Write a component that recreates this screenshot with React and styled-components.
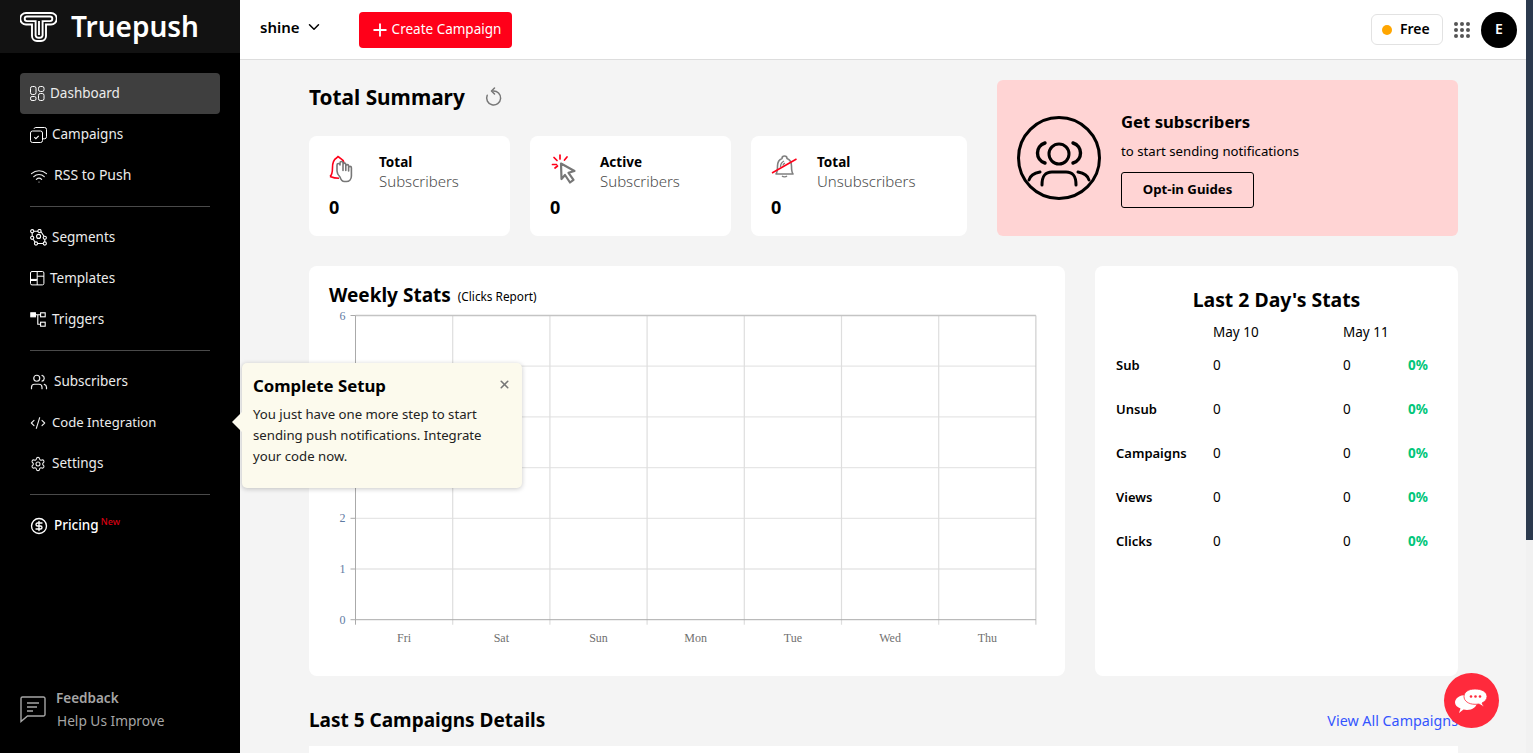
import React from 'react';
import styled, { createGlobalStyle } from 'styled-components';
import { Wifi, Users, CodeXml, Settings, CircleDollarSign, Plus, ChevronDown, X } from 'lucide-react';

const FONT = '"Noto Sans", "Open Sans", sans-serif';

const GlobalStyle = createGlobalStyle`
  html, body {
    margin: 0;
    height: 100%;
    overflow: hidden;
    font-family: ${FONT};
    color: #000;
    background: #f4f4f4;
  }
  * {
    box-sizing: border-box;
  }
`;

const Page = styled.div`
  display: flex;
  height: 753px;
  position: relative;
  overflow: hidden;
`;

/* sidebar */
const Sidebar = styled.aside`
  width: 240px;
  flex: none;
  background: #000;
  display: flex;
  flex-direction: column;
  color: #fff;
`;

const Brand = styled.div`
  height: 53px;
  background: #121212;
  display: flex;
  align-items: center;
  padding-left: 20px;
  gap: 14px;
`;

const BrandName = styled.span`
  font-size: 28px;
  font-weight: 600;
  line-height: 53px;
`;

const Nav = styled.nav`
  display: flex;
  flex-direction: column;
  padding: 20px 20px 0;
  flex: 1;
`;

const NavItem = styled.a`
  height: 41px;
  display: flex;
  align-items: center;
  padding-left: 10px;
  gap: ${({ $gap }) => $gap || 5}px;
  font-size: ${({ $size }) => $size || 13.5}px;
  color: ${({ $strong }) => ($strong ? '#fff' : '#ececec')};
  font-weight: ${({ $strong }) => ($strong ? 500 : 400)};
  border-radius: 4px;
  background: ${({ $active }) => ($active ? '#3f3f3f' : 'transparent')};
  span {
    padding-bottom: 2px;
  }
  svg {
    flex: none;
  }
`;

const Divider = styled.hr`
  border: 0;
  height: 1px;
  background: #4a4a4a;
  margin: 10px 10px;
`;

const NewTag = styled.sup`
  color: #d80012;
  font-size: 9px;
  margin-left: 2px;
  position: relative;
  top: 1px;
  line-height: 0;
`;

const Feedback = styled.div`
  display: flex;
  gap: 10px;
  padding: 0 0 23px 20px;
  color: #a6a6a6;
  font-size: 13.7px;
  align-items: center;
`;

const FeedbackText = styled.div`
  display: flex;
  flex-direction: column;
  gap: 3px;
  line-height: 19px;
  strong {
    font-weight: 600;
    font-size: 13.5px;
  }
  span {
    padding-left: 1px;
  }
`;

/* main column */
const Main = styled.div`
  flex: 1;
  min-width: 0;
  display: flex;
  flex-direction: column;
`;

const Header = styled.header`
  height: 60px;
  flex: none;
  background: #fff;
  border-bottom: 1px solid #ddd;
  display: flex;
  align-items: center;
  padding: 0 9px 0 20px;
`;

const Project = styled.div`
  display: flex;
  align-items: center;
  gap: 5px;
  font-size: 15px;
  font-weight: 600;
  width: 99px;
  padding-bottom: 6px;
`;

const CreateButton = styled.button`
  width: 153px;
  height: 36px;
  background: #ff0019;
  border: 0;
  border-radius: 4px;
  color: #fff;
  font-family: inherit;
  font-size: 13.5px;
  display: flex;
  align-items: center;
  justify-content: center;
  gap: 2px;
  padding: 0 0 2px;
  svg {
    position: relative;
    top: 1px;
  }
`;

const HeaderRight = styled.div`
  margin-left: auto;
  display: flex;
  align-items: center;
`;

const PlanPill = styled.div`
  width: 72px;
  height: 31px;
  border: 1px solid #e2e2e2;
  border-radius: 6px;
  display: flex;
  align-items: center;
  gap: 8px;
  padding: 0 0 2px 10px;
  font-size: 14px;
  font-weight: 600;
  margin-right: 10px;
  &::before {
    content: '';
    width: 10px;
    height: 10px;
    border-radius: 50%;
    background: #ffa600;
    margin-top: 2px;
  }
`;

const AppsGrid = styled.div`
  display: grid;
  grid-template-columns: repeat(3, 4px);
  gap: 2px;
  margin: 0 11px 0 1px;
  span {
    width: 4px;
    height: 4px;
    border-radius: 50%;
    background: #555;
  }
`;

const Avatar = styled.div`
  width: 36px;
  height: 36px;
  border-radius: 50%;
  background: #000;
  color: #fff;
  display: flex;
  align-items: center;
  justify-content: center;
  font-size: 14px;
  font-weight: 600;
  padding-bottom: 2px;
`;

const Content = styled.main`
  flex: 1;
  overflow: hidden;
  padding: 20px 68px 0 69px;
`;

const TopRow = styled.section`
  display: flex;
  gap: 30px;
  height: 156px;
`;

const SummaryColumn = styled.div`
  width: 658px;
  display: flex;
  flex-direction: column;
  justify-content: space-between;
`;

const TitleRow = styled.div`
  display: flex;
  align-items: center;
  gap: 19px;
  height: 34px;
`;

const PageTitle = styled.h1`
  margin: 0;
  font-size: 20.8px;
  font-weight: 700;
  color: #000;
`;

const StatCards = styled.div`
  display: grid;
  grid-template-columns: 201px 201px 216px;
  gap: 20px;
`;

const StatCard = styled.div`
  height: 100px;
  background: #fff;
  border-radius: 8px;
  padding: 17px 20px 0;
  display: grid;
  grid-template-columns: ${({ $iconWidth }) => $iconWidth || 50}px 1fr;
  grid-template-rows: 40px auto;
  row-gap: 2px;
`;

const StatLabel = styled.div`
  font-size: 13.5px;
  font-weight: 700;
  line-height: 18px;
  span {
    display: block;
    font-weight: 300;
    font-size: 15px;
    line-height: 20px;
    color: #4c4c4c;
  }
`;

const StatValue = styled.div`
  grid-column: 1 / span 2;
  font-size: 18px;
  font-weight: 700;
  line-height: 24px;
`;

const PromoCard = styled.div`
  flex: 1;
  background: #ffd4d4;
  border-radius: 6px;
  display: flex;
  align-items: center;
  gap: 20px;
  padding-left: 20px;
`;

const PromoText = styled.div`
  display: flex;
  flex-direction: column;
  align-items: flex-start;
  padding-top: 2px;
`;

const PromoTitle = styled.h3`
  margin: 0;
  font-size: 16.7px;
  font-weight: 700;
  line-height: 24px;
`;

const PromoSub = styled.p`
  margin: 7px 0 11px;
  font-size: 13.2px;
  line-height: 20px;
`;

const PromoButton = styled.button`
  width: 133px;
  height: 36px;
  background: transparent;
  border: 1px solid #000;
  border-radius: 3px;
  font-family: inherit;
  font-size: 13.2px;
  font-weight: 700;
  color: #000;
  padding: 0 0 2px;
`;

const PanelRow = styled.section`
  display: grid;
  grid-template-columns: 756px 363px;
  gap: 30px;
  margin-top: 30px;
`;

const Panel = styled.div`
  height: 410px;
  background: #fff;
  border-radius: 8px;
`;

const WeeklyPanel = styled(Panel)`
  padding: 15px 0 0 20px;
`;

const WeeklyTitle = styled.div`
  display: flex;
  align-items: center;
  gap: 7px;
  font-size: 19px;
  font-weight: 700;
  line-height: 27px;
  small {
    font-size: 11.8px;
    font-weight: 400;
    padding-top: 2px;
  }
`;

const ChartFrame = styled.svg`
  display: block;
  margin-top: -1px;
`;

const DaysPanel = styled(Panel)`
  padding: 21px 21px 0;
`;

const DaysTitle = styled.h2`
  margin: 0 0 8px;
  text-align: center;
  font-size: 19.4px;
  font-weight: 700;
  line-height: 26px;
`;

const DaysGrid = styled.div`
  display: grid;
  grid-template-columns: 97px 130px 65px 1fr;
  grid-template-rows: 22px;
  grid-auto-rows: 44px;
  font-size: 13.5px;
  align-items: center;
`;

const DaysHead = styled.div`
  font-size: 13.5px;
`;

const DaysLabel = styled.div`
  font-weight: 600;
  font-size: 13px;
`;

const Percent = styled.div`
  color: #00c67a;
  font-weight: 700;
  font-size: 13.5px;
`;

const CampaignHead = styled.div`
  display: flex;
  justify-content: space-between;
  align-items: center;
  margin-top: 31px;
  height: 26px;
`;

const SectionTitle = styled.h2`
  margin: 0;
  font-size: 19px;
  font-weight: 700;
`;

const ViewAll = styled.a`
  color: #3354ff;
  font-size: 14.3px;
  padding-top: 1px;
`;

const CampaignTable = styled.div`
  margin-top: 13px;
  height: 60px;
  background: #fff;
`;

const Scrollbar = styled.div`
  width: 7px;
  flex: none;
  background: #f1f1f1;
  &::before {
    content: '';
    display: block;
    height: 540px;
    background: #2c3a4e;
  }
`;

/* things lying over the page */
const SetupTip = styled.div`
  position: absolute;
  left: 242px;
  top: 363px;
  width: 280px;
  height: 125px;
  background: #fcfaed;
  border-radius: 5px;
  box-shadow: 0 1px 5px rgba(0, 0, 0, 0.22);
  padding: 10px 11px;
  &::before {
    content: '';
    position: absolute;
    left: -10px;
    top: 49px;
    width: 20px;
    height: 20px;
    background: #fcfaed;
    clip-path: polygon(50% 0, 100% 50%, 50% 100%, 0 50%);
  }
`;

const TipTitle = styled.div`
  font-size: 16.8px;
  font-weight: 700;
  line-height: 26px;
  margin-bottom: 5px;
`;

const TipText = styled.div`
  font-size: 13.2px;
  line-height: 21px;
  color: #222;
`;

const TipClose = styled.span`
  position: absolute;
  right: 11px;
  top: 15px;
  color: #777;
  display: flex;
`;

const ChatBubble = styled.div`
  position: absolute;
  left: 1444px;
  top: 673px;
  width: 55px;
  height: 55px;
  border-radius: 50%;
  background: #ff2a3c;
  display: flex;
  align-items: center;
  justify-content: center;
`;

const LogoMark = () => (
  <svg width="37" height="30" viewBox="0 0 37 30" fill="none" stroke="#fff" strokeWidth="1.900">
    <path d="M6 1H31a5.500 5.500 0 0 1 0 11.500H26V24a5 5 0 0 1-5 5H17a5 5 0 0 1-5-5V12.500H6A5.500 5.500 0 0 1 6 1Z" />
    <path d="M7 4.500H30a2.300 2.300 0 0 1 0 4.600H22.600V23.500a3 3 0 0 1-3 2.300h-1a3 3 0 0 1-3-2.300V9.100H7a2.300 2.300 0 0 1 0-4.600Z" />
    <path d="M19 9V23" />
  </svg>
);

const DashIcon = () => (
  <svg width="15" height="15" viewBox="0 0 15 15" fill="none" stroke="#fff" strokeWidth="1">
    <rect x="0.5" y="0.5" width="5.500" height="8" rx="1.800" />
    <rect x="8.500" y="0.5" width="5.500" height="5" rx="1.800" />
    <rect x="0.5" y="10.500" width="5.500" height="4" rx="1.600" />
    <rect x="8.500" y="7.500" width="5.500" height="7" rx="1.800" />
  </svg>
);

const CampaignIcon = () => (
  <svg width="17" height="16" viewBox="0 0 17 16" fill="none" stroke="#fff" strokeWidth="1">
    <rect x="0.5" y="4" width="12" height="11.500" rx="2" />
    <path d="M4 1.800A1.800 1.800 0 0 1 5.800.5h8.700a2 2 0 0 1 2 2v7.300a2 2 0 0 1-1.800 2h-2" />
    <path d="M4.300 10.200l1.600 1.500 2.800-2.800" strokeWidth="1.100" />
  </svg>
);

const SegmentIcon = () => (
  <svg width="17" height="17" viewBox="0 0 17 17" fill="none" stroke="#fff" strokeWidth="1.100">
    <circle cx="2.200" cy="2.200" r="1.600" />
    <circle cx="9.500" cy="2" r="1.600" />
    <circle cx="2.200" cy="8.800" r="1.600" />
    <circle cx="8.600" cy="7.400" r="2" />
    <circle cx="14.800" cy="8.800" r="1.600" />
    <circle cx="6" cy="14.500" r="1.600" />
    <circle cx="14.800" cy="14.500" r="1.600" />
    <path d="M3.800 2.200H8M2.200 3.800V7.200M11 2.800l3 4.500M3.200 10.200L5 13M7.600 14.500H13.200M14.800 10.400V13" />
  </svg>
);

const TemplateIcon = () => (
  <svg width="15" height="15" viewBox="0 0 15 15" fill="none" stroke="#fff" strokeWidth="1">
    <rect x="0.5" y="0.5" width="13.400" height="13.400" rx="1.500" />
    <path d="M7.200 .5V14M.5 8.400H7.200M7.200 5.200H14" />
    <rect x="0.8" y="8.400" width="6" height="1.600" fill="#fff" stroke="none" />
  </svg>
);

const TriggerIcon = () => (
  <svg width="16" height="15" viewBox="0 0 16 15" fill="none" stroke="#fff" strokeWidth="1.100">
    <rect x="0.8" y="0.8" width="4.600" height="4" fill="#fff" />
    <rect x="10.600" y="0.8" width="4.600" height="4" />
    <rect x="10.600" y="10.200" width="4.600" height="4" />
    <path d="M5.400 2.800h5.200M7.800 2.800V12.200h2.800" />
  </svg>
);

const FeedbackIcon = () => (
  <svg width="26" height="27" viewBox="0 0 26 27" fill="none" stroke="#a6a6a6" strokeWidth="1.400">
    <path d="M2.500 1h21a1.500 1.500 0 0 1 1.500 1.500v16a1.500 1.500 0 0 1-1.500 1.500H7.500L1 25.500V2.500A1.500 1.500 0 0 1 2.500 1Z" />
    <path d="M7 7H19M7 11H17M7 15H13" strokeWidth="1.600" />
  </svg>
);

const RefreshIcon = () => (
  <svg width="18" height="20" viewBox="0 0 18 20" fill="none" stroke="#777" strokeWidth="1.500" strokeLinecap="round" strokeLinejoin="round">
    <path d="M3.200 8.200A7 7 0 1 0 9 4" />
    <path d="M10.500 1L7.500 4l3 3" />
  </svg>
);

const BellHandIcon = () => (
  <svg width="32" height="32" viewBox="0 0 32 32" fill="none">
    <path d="M1 23.500c2-1.500 2.500-5 2.500-9 0-4.500 1.500-8 4-9.500L9 3.500l2 1.500c2 1 3.500 3 4 5M1 23.500c3 1.200 6 1.800 9 1.800" stroke="#ff0019" strokeWidth="1.600" />
    <path d="M11 24c-2-2-3-4-3-6V12a1.500 1.500 0 0 1 3 0v-2a1.500 1.500 0 0 1 3 0v7.500V11.500a1.400 1.400 0 0 1 2.800 0v6-4.500a1.400 1.400 0 0 1 2.800 0v5-3.200a1.400 1.400 0 0 1 2.800 0V23c0 3-2 5.500-5 5.500h-2c-2 0-3.500-1.500-4.400-4.500Z" fill="#fff" stroke="#777" strokeWidth="1.600" strokeLinejoin="round" />
  </svg>
);

const ClickIcon = () => (
  <svg width="28" height="32" viewBox="0 0 28 32" fill="none">
    <path d="M11 10.500l13.500 7.500-6 1.800 5 7-3.500 2.700-5-7.500-3.500 4Z" stroke="#777" strokeWidth="2.200" strokeLinejoin="round" />
    <path d="M10 2v4M4 4.500l3 3M2.500 11.500h4M17 4l-2.500 3M5 15l2.500-2" stroke="#ff0019" strokeWidth="1.700" strokeLinecap="round" />
  </svg>
);

const BellOffIcon = () => (
  <svg width="27" height="28" viewBox="0 0 27 28" fill="none">
    <path d="M5 21c1.500-2 1.500-5 1.500-8 0-4 2-6.500 4.500-7.500a2.500 2.500 0 0 1 5 0c2.500 1 4.500 3.500 4.500 7.500 0 3 0 6 1.500 8Z" stroke="#808080" strokeWidth="1.600" strokeLinejoin="round" />
    <path d="M9.500 14C9.500 11 11 9 13 8M12 12.500c0-1 .8-2 2-2.400M11 23a3 2 0 0 0 5 0" stroke="#808080" strokeWidth="1.300" />
    <path d="M1 20L25.500 6" stroke="#ff0019" strokeWidth="1.500" />
  </svg>
);

const PeopleRoundIcon = () => (
  <svg width="84" height="84" viewBox="0 0 84 84" fill="none" stroke="#000" strokeWidth="3" strokeLinecap="round">
    <circle cx="42" cy="42" r="40.500" />
    <circle cx="42" cy="38" r="10" />
    <path d="M28 27C18 30 18 44 28 47M56 27C66 30 66 44 56 47" strokeWidth="3.400" />
    <path d="M25 69c0-9 3-13 10-13h14c7 0 10 4 10 13M12 64c1-4 5-7 11-8M72 64c-1-4-5-7-11-8" />
  </svg>
);

const ChatIcon = () => (
  <svg width="35" height="26" viewBox="0 0 35 26" fill="none">
    <path d="M12 7c6.500 0 11 3.500 11 7.500S18.500 22 13 22c-1 0-2.500-.2-3.500-.5L5 25l1.500-4.500C3 19 1 17 1 14.500 1 10.500 5.500 7 12 7Z" fill="#fff" />
    <path d="M21 1c7 0 12 3 12 7.500 0 2.800-2 5-5 6.500l2 4-5-3c-1.500.2-2.800.3-4 .3-6.500 0-11-3.300-11-7.800S14.500 1 21 1Z" fill="#fff" stroke="#ff2a3c" strokeWidth="0.800" />
    <circle cx="17" cy="8.500" r="1.300" fill="#ff2a3c" />
    <circle cx="21.500" cy="8.500" r="1.300" fill="#ff2a3c" />
    <circle cx="26" cy="8.500" r="1.300" fill="#ff2a3c" />
  </svg>
);

const WEEK = ['Fri', 'Sat', 'Sun', 'Mon', 'Tue', 'Wed', 'Thu'];
const LEFT = 26.5;
const COL = 97.2;
const TOP = 0.5;
const ROW = 50.7;
// 3, 4 and 5 sit behind the setup tooltip
const Y_LABELS = [0, 1, 2, 6];

const WeeklyChart = () => (
  <ChartFrame width="730" height="340" viewBox="0 -6 730 340">
    {[1, 2, 3, 4, 5].map((n) => (
      <line key={n} x1={LEFT} x2={LEFT + COL * 7} y1={TOP + ROW * n} y2={TOP + ROW * n} stroke="#e6e6e6" strokeWidth="1.300" />
    ))}
    {[1, 2, 3, 4, 5, 6].map((n) => (
      <line key={n} x1={LEFT + COL * n} x2={LEFT + COL * n} y1={TOP} y2={TOP + ROW * 6 + 5} stroke="#dedede" strokeWidth="1.200" />
    ))}
    <line x1={LEFT} x2={LEFT + COL * 7} y1={TOP} y2={TOP} stroke="#c4c4c4" strokeWidth="1.500" />
    <line x1={LEFT + COL * 7} x2={LEFT + COL * 7} y1={TOP} y2={TOP + ROW * 6 + 5} stroke="#c4c4c4" />
    <line x1={LEFT} x2={LEFT + COL * 7} y1={TOP + ROW * 6} y2={TOP + ROW * 6} stroke="#aaa" />
    <line x1={LEFT} x2={LEFT} y1={TOP} y2={TOP + ROW * 6 + 5} stroke="#aaa" />
    {[0, 1, 2, 3, 4, 5, 6].map((n) => (
      <line key={n} x1={LEFT - 5} x2={LEFT} y1={TOP + ROW * (6 - n)} y2={TOP + ROW * (6 - n)} stroke="#aaa" />
    ))}
    {Y_LABELS.map((n) => (
      <text key={n} x={LEFT - 10} y={TOP + ROW * (6 - n) + 4} textAnchor="end" fontFamily="Liberation Serif" fontSize="12" fill="#5f7ba3">{n}</text>
    ))}
    {WEEK.map((day, i) => (
      <text key={day} x={LEFT + COL * i + COL / 2} y={TOP + ROW * 6 + 22} textAnchor="middle" fontFamily="Liberation Serif" fontSize="12" fill="#70706f">{day}</text>
    ))}
  </ChartFrame>
);

const DAY_ROWS = ['Sub', 'Unsub', 'Campaigns', 'Views', 'Clicks'];

const App = () => (
  <Page>
    <GlobalStyle />
    <Sidebar>
      <Brand>
        <LogoMark />
        <BrandName>Truepush</BrandName>
      </Brand>
      <Nav>
        <NavItem $active><DashIcon /><span>Dashboard</span></NavItem>
        <NavItem $gap={5}><CampaignIcon /><span>Campaigns</span></NavItem>
        <NavItem $gap={6} $size={14}><Wifi size={18} strokeWidth={1.600} /><span>RSS to Push</span></NavItem>
        <Divider />
        <NavItem $gap={5}><SegmentIcon /><span>Segments</span></NavItem>
        <NavItem $gap={5}><TemplateIcon /><span>Templates</span></NavItem>
        <NavItem $gap={6}><TriggerIcon /><span>Triggers</span></NavItem>
        <Divider />
        <NavItem $gap={6}><Users size={18} strokeWidth={1.600} /><span>Subscribers</span></NavItem>
        <NavItem $gap={6} $size={13.1}><CodeXml size={16} strokeWidth={1.700} /><span>Code Integration</span></NavItem>
        <NavItem $gap={6}><Settings size={16} strokeWidth={1.600} /><span>Settings</span></NavItem>
        <Divider />
        <NavItem $gap={6} $strong><CircleDollarSign size={18} strokeWidth={1.800} /><span>Pricing<NewTag>New</NewTag></span></NavItem>
      </Nav>
      <Feedback>
        <FeedbackIcon />
        <FeedbackText>
          <strong>Feedback</strong>
          <span>Help Us Improve</span>
        </FeedbackText>
      </Feedback>
    </Sidebar>

    <Main>
      <Header>
        <Project>shine <ChevronDown size={18} strokeWidth={2} /></Project>
        <CreateButton><Plus size={20} strokeWidth={2.200} />Create Campaign</CreateButton>
        <HeaderRight>
          <PlanPill>Free</PlanPill>
          <AppsGrid>
            {Array.from({ length: 9 }, (_, i) => <span key={i} />)}
          </AppsGrid>
          <Avatar>E</Avatar>
        </HeaderRight>
      </Header>

      <Content>
        <TopRow>
          <SummaryColumn>
            <TitleRow>
              <PageTitle>Total Summary</PageTitle>
              <RefreshIcon />
            </TitleRow>
            <StatCards>
              <StatCard>
                <BellHandIcon />
                <StatLabel>Total<span>Subscribers</span></StatLabel>
                <StatValue>0</StatValue>
              </StatCard>
              <StatCard>
                <ClickIcon />
                <StatLabel>Active<span>Subscribers</span></StatLabel>
                <StatValue>0</StatValue>
              </StatCard>
              <StatCard $iconWidth={46}>
                <BellOffIcon />
                <StatLabel>Total<span>Unsubscribers</span></StatLabel>
                <StatValue>0</StatValue>
              </StatCard>
            </StatCards>
          </SummaryColumn>
          <PromoCard>
            <PeopleRoundIcon />
            <PromoText>
              <PromoTitle>Get subscribers</PromoTitle>
              <PromoSub>to start sending notifications</PromoSub>
              <PromoButton>Opt-in Guides</PromoButton>
            </PromoText>
          </PromoCard>
        </TopRow>

        <PanelRow>
          <WeeklyPanel>
            <WeeklyTitle>Weekly Stats <small>(Clicks Report)</small></WeeklyTitle>
            <WeeklyChart />
          </WeeklyPanel>
          <DaysPanel>
            <DaysTitle>Last 2 Day's Stats</DaysTitle>
            <DaysGrid>
              <DaysHead />
              <DaysHead>May 10</DaysHead>
              <DaysHead>May 11</DaysHead>
              <DaysHead />
              {DAY_ROWS.map((label) => (
                <React.Fragment key={label}>
                  <DaysLabel>{label}</DaysLabel>
                  <div>0</div>
                  <div>0</div>
                  <Percent>0%</Percent>
                </React.Fragment>
              ))}
            </DaysGrid>
          </DaysPanel>
        </PanelRow>

        <CampaignHead>
          <SectionTitle>Last 5 Campaigns Details</SectionTitle>
          <ViewAll>View All Campaigns</ViewAll>
        </CampaignHead>
        <CampaignTable />
      </Content>
    </Main>
    <Scrollbar />

    <SetupTip>
      <TipTitle>Complete Setup</TipTitle>
      <TipText>You just have one more step to start<br />sending push notifications. Integrate<br />your code now.</TipText>
      <TipClose><X size={13} strokeWidth={3} /></TipClose>
    </SetupTip>
    <ChatBubble><ChatIcon /></ChatBubble>
  </Page>
);

export default App;
